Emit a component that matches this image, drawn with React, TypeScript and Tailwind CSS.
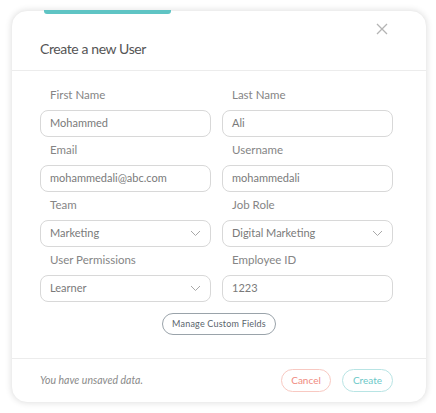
import React from "react";

const fields = [
  { label: "First Name", value: "Mohammed" },
  { label: "Last Name", value: "Ali" },
  { label: "Email", value: "mohammedali@abc.com" },
  { label: "Username", value: "mohammedali" },
  { label: "Team", value: "Marketing", select: true },
  { label: "Job Role", value: "Digital Marketing", select: true },
  { label: "User Permissions", value: "Learner", select: true },
  { label: "Employee ID", value: "1223" },
];

function Chevron() {
  return (
    <svg width="11" height="7" viewBox="0 0 11 7" fill="none">
      <path d="M1 1l4.5 4.5L10 1" stroke="#a8a8a8" strokeWidth="1" />
    </svg>
  );
}

function Field({ label, value, select }: any) {
  return (
    <div className="flex flex-col">
      <div className="pl-[10px] text-[11.5px] leading-[16px] text-[#858585] mb-[7px]">{label}</div>
      <div className="h-[27px] border border-[#d8d8d8] rounded-[8px] px-[9px] flex items-center justify-between text-[11px] text-[#7a7a7a]">
        <span>{value}</span>
        {select && <Chevron />}
      </div>
    </div>
  );
}

export default function App() {
  return (
    <div className="w-[436px] h-[413px] bg-white pt-[10px] pl-[11px]" style={{ fontFamily: "Lato, 'Open Sans', sans-serif" }}>
      <div className="relative w-[416px] h-[393px] bg-white rounded-[16px] border border-[#eeeeee] shadow-[0_0_6px_rgba(0,0,0,0.12)] flex flex-col">
        <div className="absolute top-[-1px] left-[32px] w-[127px] h-[4px] rounded-b-[3px] bg-[#5fc4c4]" />
        <div className="relative h-[60px] pl-[28px] pt-[28px] border-b border-[#ececec]">
          <div className="text-[14px] leading-[20px] tracking-[-0.4px] text-[#555555]">Create a new User</div>
          <svg className="absolute top-[12px] right-[38px]" width="12" height="12" viewBox="0 0 12 12">
            <path d="M1 1l10 10M11 1L1 11" stroke="#b4b4b4" strokeWidth="1.3" />
          </svg>
        </div>
        <div className="pl-[28px] pr-[33px] pt-[16px] grid grid-cols-2 gap-x-[11px] gap-y-[5px]">
          {fields.map((f) => (
            <Field key={f.label} {...f} />
          ))}
        </div>
        <div className="flex justify-center mt-[11px]">
          <button className="h-[22px] w-[114px] rounded-full border border-[#9aa3aa] text-[9px] tracking-[0.2px] text-[#5a646c]">
            Manage Custom Fields
          </button>
        </div>
        <div className="mt-[23px] border-t border-[#ececec] flex-1 flex items-center justify-between pl-[28px] pr-[33px]">
          <span className="italic text-[10.5px] text-[#8a8a8a]">You have unsaved data.</span>
          <div className="flex gap-[11px]">
            <button className="h-[23px] w-[50px] rounded-full border border-[#f8c9c2] text-[10px] text-[#f08a7e]">Cancel</button>
            <button className="h-[23px] w-[51px] rounded-full border border-[#b8e4e4] text-[10px] text-[#6cc8c8]">Create</button>
          </div>
        </div>
      </div>
    </div>
  );
}
